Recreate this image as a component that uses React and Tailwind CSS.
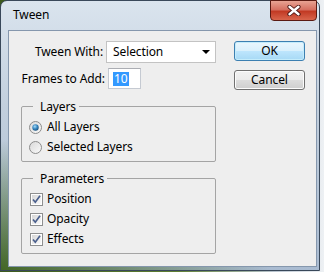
import React from "react";

/* ================= SMALL CONTROLS ================= */

function Radio({ checked }) {
  return (
    <svg width="13" height="13" viewBox="0 0 13 13" className="shrink-0">
      <defs>
        <linearGradient id="rbg" x1="0" y1="0" x2="1" y2="1">
          <stop offset="0" stopColor="#d8d8d8" />
          <stop offset="1" stopColor="#fbfbfb" />
        </linearGradient>
        <radialGradient id="rdot" cx="0.4" cy="0.35" r="0.7">
          <stop offset="0" stopColor="#a9dcf7" />
          <stop offset="0.5" stopColor="#3a8ac4" />
          <stop offset="1" stopColor="#1b4f7a" />
        </radialGradient>
      </defs>
      <circle cx="6.5" cy="6.5" r="6" fill="url(#rbg)" stroke="#8c8c8c" />
      {checked && <circle cx="6.5" cy="6.5" r="3.2" fill="url(#rdot)" />}
    </svg>
  );
}

function Check() {
  return (
    <svg width="13" height="13" viewBox="0 0 13 13" className="shrink-0">
      <defs>
        <linearGradient id="cbg" x1="0" y1="0" x2="1" y2="1">
          <stop offset="0" stopColor="#d6d6d6" />
          <stop offset="1" stopColor="#fafafa" />
        </linearGradient>
      </defs>
      <rect x="0.5" y="0.5" width="12" height="12" fill="#fff" stroke="#8e8f8f" />
      <rect x="2" y="2" width="9" height="9" fill="url(#cbg)" />
      <path d="M3 6.5 L5.3 9.2 L10 2.8" fill="none" stroke="#4a5f8c" strokeWidth="1.7" />
    </svg>
  );
}

function GroupBox({ title, children }) {
  return (
    <fieldset className="border border-[#a4a4a4] rounded-[2px] pl-[7px] pt-[2px] pb-[4px]">
      <legend className="ml-[4px] pl-[7px] pr-[3px] leading-[17px] h-[17px]">{title}</legend>
      {children}
    </fieldset>
  );
}

/* ================= MAIN ================= */

export default function App() {
  return (
    <div
      className="w-[324px] h-[272px] overflow-hidden bg-[linear-gradient(to_right,#3c5a1d,#5f7f33_55%,#b9c4cf_85%,#eef1f4)] text-[12px] tracking-[-0.1px] text-black whitespace-nowrap"
      style={{ fontFamily: "'Noto Sans', 'Open Sans', sans-serif" }}
    >
      <div className="w-[320px] h-[271px] flex flex-col rounded-t-[7px] border border-[#39485a] bg-[radial-gradient(ellipse_270px_130px_at_0%_100%,rgba(62,98,28,0.95),rgba(62,98,28,0)),linear-gradient(#dae4ee,#c2cfdd_40%,#a9bbd1)]">
        {/* TITLE BAR */}
        <div className="h-[29px] flex items-start">
          <span className="ml-[12px] mt-[6px] leading-[16px]">Tween</span>
          <div className="ml-auto mr-[2px] w-[47px] h-[21px] -mt-px rounded-b-[4px] border border-[#5a1a12] bg-[linear-gradient(#e8a393,#d67061_45%,#c23a24_55%,#d8654c)] flex items-center justify-center">
            <svg width="14" height="11" viewBox="0 0 14 11">
              <path d="M2.5 1.8 L11.5 9.2 M11.5 1.8 L2.5 9.2" stroke="#4a1410" strokeWidth="4.2" strokeLinecap="round" />
              <path d="M2.5 1.8 L11.5 9.2 M11.5 1.8 L2.5 9.2" stroke="#ffffff" strokeWidth="2.4" strokeLinecap="round" />
            </svg>
          </div>
        </div>

        {/* CLIENT AREA */}
        <div className="ml-[7px] mr-[2px] h-[237px] border border-[#8597ad] bg-[#eeeeee] flex pl-[12px] pt-[10px]">
          <div className="w-[195px] flex flex-col">
            <div className="flex items-center h-[22px]">
              <div className="w-[84px] flex justify-end">Tween With:</div>
              <div className="ml-[3px] w-[110px] h-[22px] shrink-0 bg-white border border-[#c3c3c3] flex items-center pl-[6px] pr-[5px]">
                <span>Selection</span>
                <svg className="ml-auto" width="8" height="4" viewBox="0 0 8 4">
                  <path d="M0 0 H8 L4 4 Z" fill="#000" />
                </svg>
              </div>
            </div>

            <div className="flex items-center h-[21px] mt-[5px]">
              <div className="w-[84px] flex justify-end">Frames to Add:</div>
              <div className="ml-[3px] w-[33px] h-[21px] shrink-0 bg-white border border-[#c5cad2] border-t-[#abadb3] flex items-center pl-[4px]">
                <span className="bg-[#3399ff] text-white leading-[14px] px-px">10</span>
              </div>
            </div>

            <div className="mt-[9px]">
              <GroupBox title="Layers">
                <div className="h-[20px] flex items-center gap-[5px]">
                  <Radio checked />
                  <span>All Layers</span>
                </div>
                <div className="h-[20px] flex items-center gap-[5px]">
                  <Radio />
                  <span>Selected Layers</span>
                </div>
              </GroupBox>
            </div>

            <div className="mt-[8px]">
              <GroupBox title="Parameters">
                {["Position", "Opacity", "Effects"].map((t) => (
                  <div key={t} className="h-[20px] flex items-center gap-[4px] pl-px">
                    <Check />
                    <span>{t}</span>
                  </div>
                ))}
              </GroupBox>
            </div>
          </div>

          <div className="ml-[18px] w-[71px] flex flex-col gap-[9px]">
            <button className="h-[20px] rounded-[3px] border border-[#3c7fb1] bg-[linear-gradient(#eaf6fd,#d9f0fc_50%,#bee6fd_50%,#a7d9f5)] shadow-[inset_0_0_0_1px_#c4ecfb] leading-none">
              OK
            </button>
            <button className="h-[20px] rounded-[3px] border border-[#707070] bg-[linear-gradient(#f2f2f2,#ebebeb_50%,#dddddd_50%,#cfcfcf)] shadow-[inset_0_0_0_1px_#fcfcfc] leading-none">
              Cancel
            </button>
          </div>
        </div>
      </div>
    </div>
  );
}
